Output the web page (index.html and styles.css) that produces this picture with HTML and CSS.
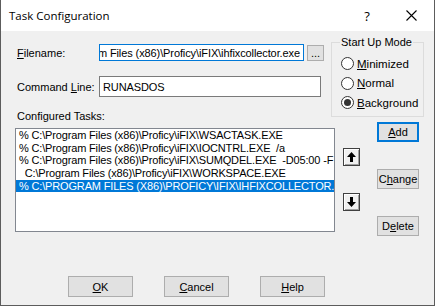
FILE: index.html
```html
<!DOCTYPE html>
<html lang="en">

<head>
    <meta charset="UTF-8">
    <title>Task Configuration</title>
    <link rel="stylesheet" href="styles.css">
</head>

<body>
    <div class="window">
        <div class="titlebar">
            <span class="title">Task Configuration</span>
            <span class="tb-btn help">?</span>
            <span class="tb-btn close">
                <svg width="11" height="11" viewBox="0 0 11 11"><path d="M0.5 0.5 L10.5 10.5 M10.5 0.5 L0.5 10.5" stroke="#000" stroke-width="1.1" /></svg>
            </span>
        </div>

        <div class="dialog">
            <div class="main">
                <div class="left">
                    <div class="row row-file">
                        <label class="lbl"><u>F</u>ilename:</label>
                        <div class="edit focused">
                            <span class="edit-text">C:\Program Files (x86)\Proficy\iFIX\ihfixcollector.exe</span>
                        </div>
                        <button class="btn browse">...</button>
                    </div>
                    <div class="row row-cmd">
                        <label class="lbl">Command <u>L</u>ine:</label>
                        <div class="edit wide">
                            <span class="edit-text start">RUNASDOS</span>
                        </div>
                    </div>
                    <div class="lbl tasks-lbl">Configured Tasks:</div>
                    <div class="listbox">
                        <div class="item">% C:\Program Files (x86)\Proficy\iFIX\WSACTASK.EXE</div>
                        <div class="item">% C:\Program Files (x86)\Proficy\iFIX\IOCNTRL.EXE&nbsp; /a</div>
                        <div class="item">% C:\Program Files (x86)\Proficy\iFIX\SUMQDEL.EXE&nbsp; -D05:00 -F</div>
                        <div class="item">&nbsp; C:\Program Files (x86)\Proficy\iFIX\WORKSPACE.EXE</div>
                        <div class="item selected">% C:\PROGRAM FILES (X86)\PROFICY\IFIX\IHFIXCOLLECTOR.EXE</div>
                    </div>
                </div>

                <div class="right">
                    <fieldset class="group">
                        <legend>Start Up Mode</legend>
                        <div class="radio"><span class="dot"></span><u>M</u>inimized</div>
                        <div class="radio"><span class="dot"></span><u>N</u>ormal</div>
                        <div class="radio"><span class="dot checked"></span><u>B</u>ackground</div>
                    </fieldset>
                    <div class="side">
                        <div class="arrows">
                            <button class="arrow up">
                                <svg width="9" height="10" viewBox="0 0 9 10"><path d="M4.5 0 L9 5 L6 5 L6 10 L3 10 L3 5 L0 5 Z" fill="#000" /></svg>
                            </button>
                            <button class="arrow down">
                                <svg width="9" height="10" viewBox="0 0 9 10"><path d="M4.5 10 L9 5 L6 5 L6 0 L3 0 L3 5 L0 5 Z" fill="#000" /></svg>
                            </button>
                        </div>
                        <div class="actions">
                            <button class="btn default"><u>A</u>dd</button>
                            <button class="btn">C<u>h</u>ange</button>
                            <button class="btn">D<u>e</u>lete</button>
                        </div>
                    </div>
                </div>
            </div>

            <div class="footer">
                <button class="btn big"><u>O</u>K</button>
                <button class="btn big"><u>C</u>ancel</button>
                <button class="btn big"><u>H</u>elp</button>
            </div>
        </div>
    </div>
</body>

</html>
```

FILE: styles.css
```css
* {
    box-sizing: border-box;
}

body {
    margin: 0;
    font-family: "Liberation Sans", Arial, sans-serif;
    font-size: 11px;
    color: #000;
    background: #fff;
}

.window {
    width: 435px;
    height: 306px;
    border: 1px solid #5c5c5c;
    border-top: none;
    display: flex;
    flex-direction: column;
}

.titlebar {
    height: 31px;
    background: #fff;
    display: flex;
    align-items: center;
    padding-left: 8px;
}

.title {
    font-family: "Open Sans", "Noto Sans", sans-serif;
    font-size: 11.5px;
    flex: 1;
}

.tb-btn {
    width: 46px;
    height: 31px;
    display: flex;
    align-items: center;
    justify-content: center;
    font-family: "Open Sans", sans-serif;
    font-size: 13px;
}

.tb-btn.help {
    padding-left: 4px;
}

.dialog {
    flex: 1;
    background: #f0f0f0;
    display: flex;
    flex-direction: column;
}

.main {
    display: flex;
    padding-left: 14px;
}

.left {
    width: 316px;
}

.row {
    display: flex;
    align-items: center;
}

.row-file {
    margin-top: 13px;
    height: 17px;
}

.row-cmd {
    margin-top: 15px;
    height: 21px;
}

.lbl {
    width: 84px;
    padding-left: 2px;
}

.edit {
    height: 100%;
    width: 205px;
    border: 1px solid #7a7a7a;
    background: #fff;
    overflow: hidden;
    white-space: nowrap;
    display: flex;
    align-items: center;
    justify-content: flex-end;
    padding: 0 3px;
    letter-spacing: -0.1px;
}

.edit.focused {
    border-color: #0078d7;
}

.edit.wide {
    width: 222px;
    justify-content: flex-start;
}

.edit-text {
    flex-shrink: 0;
}

.btn {
    font-family: "Liberation Sans", Arial, sans-serif;
    font-size: 11px;
    color: #000;
    background: #e1e1e1;
    border: 1px solid #adadad;
    padding: 0;
    height: 21px;
    width: 42px;
}

.btn u {
    text-decoration: underline;
}

.btn.default {
    border-color: #0078d7;
    box-shadow: inset 0 0 0 1px #0078d7;
}

.browse {
    width: 17px;
    height: 16px;
    margin-left: 3px;
    line-height: 10px;
}

.tasks-lbl {
    margin-top: 13px;
    width: auto;
    height: 13px;
}

.listbox {
    margin-top: 5px;
    width: 320px;
    height: 104px;
    border: 1px solid #828790;
    background: #fff;
    overflow: hidden;
}

.item {
    height: 12.7px;
    line-height: 12.7px;
    padding-left: 3px;
    white-space: nowrap;
    overflow: hidden;
    letter-spacing: -0.16px;
}

.item.selected {
    background: #0078d7;
    color: #fff;
}

.right {
    width: 93px;
}

.group {
    margin: 5px 0 0 0;
    padding: 6px 0 0 9px;
    width: 93px;
    height: 81px;
    border: 1px solid #dcdcdc;
}

.group legend {
    padding: 0 1px;
    margin-left: -1px;
}

.radio {
    display: flex;
    align-items: center;
    height: 19.5px;
    font-size: 11.5px;
}

.dot {
    width: 13px;
    height: 13px;
    border: 1px solid #333;
    border-radius: 50%;
    background: #fff;
    margin-right: 3px;
    display: flex;
    align-items: center;
    justify-content: center;
}

.dot.checked::after {
    content: "";
    width: 7px;
    height: 7px;
    border-radius: 50%;
    background: #333;
}

.side {
    display: flex;
}

.arrows {
    display: flex;
    flex-direction: column;
    margin-left: 12px;
    padding-top: 31px;
}

.arrow {
    width: 17px;
    height: 18px;
    padding: 0;
    background: #f0f0f0;
    border: 1px solid #404040;
    box-shadow: inset 1px 1px 0 #fff, inset -1px -1px 0 #a0a0a0;
    display: flex;
    align-items: center;
    justify-content: center;
}

.arrow.down {
    margin-top: 27px;
}

.actions {
    display: flex;
    flex-direction: column;
    gap: 27px;
    margin-left: 17px;
    padding-top: 5px;
}

.actions .btn {
    height: 20px;
}

.footer {
    margin-top: auto;
    margin-bottom: 8px;
    display: flex;
    gap: 31px;
    padding-left: 67px;
}

.btn.big {
    width: 65px;
    height: 21px;
}
```
